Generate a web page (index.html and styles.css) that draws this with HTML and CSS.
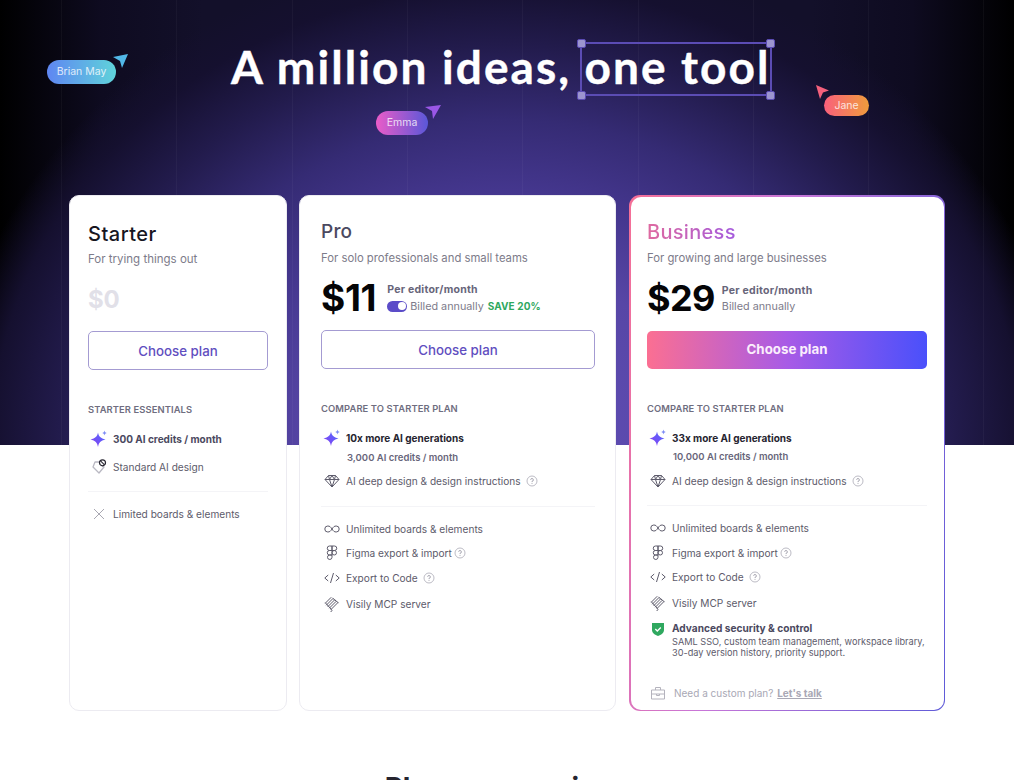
FILE: index.html
```html
<!DOCTYPE HTML>
<html><head>
  <meta charset="utf-8">
  <title>Pricing</title>
  <link rel="stylesheet" href="styles.css">
</head>
<body>

<svg width="0" height="0" class="defs">
  <defs>
    <linearGradient id="spark" x1="0" y1="1" x2="1" y2="0">
      <stop offset="0" stop-color="#8a3df0"/><stop offset="1" stop-color="#4f6cff"/>
    </linearGradient>
    <symbol id="i-spark" viewBox="0 0 18 18">
      <path fill="url(#spark)" d="M8 2.500c.8 4 2.600 5.900 7.500 7-4.900 1.100-6.700 3-7.500 7.500-.8-4.500-2.600-6.400-7.500-7.500 4.900-1.100 6.700-3 7.500-7z"/>
      <path fill="#7d8cf5" d="M14.500.5c.3 1.500 1 2.200 2.500 2.500-1.500.3-2.200 1-2.500 2.500-.3-1.500-1-2.200-2.500-2.500 1.500-.3 2.200-1 2.500-2.500z"/>
    </symbol>
    <symbol id="i-gem" viewBox="0 0 16 16">
      <path fill="none" stroke="#5d5b6b" stroke-width="1" stroke-linejoin="round" d="M4.500 2.500h7l3.500 4-7 7.500-7-7.500zM1 6.500h14M5.500 6.500 8 14l2.500-7.500M4.500 2.500l1 4 2.500-4 2.500 4 1-4"/>
    </symbol>
    <symbol id="i-inf" viewBox="0 0 16 16">
      <path fill="none" stroke="#5d5b6b" stroke-width="1" d="M8 8C6.800 6 5.700 5 3.800 5a3 3 0 0 0 0 6C5.700 11 6.800 10 8 8c1.200-2 2.300-3 4.200-3a3 3 0 0 1 0 6C10.300 11 9.200 10 8 8z"/>
    </symbol>
    <symbol id="i-figma" viewBox="0 0 16 16">
      <path fill="none" stroke="#5d5b6b" stroke-width="1" d="M8 1H5.500a2.250 2.250 0 0 0 0 4.500H8zM8 1h2.500a2.250 2.250 0 0 1 0 4.500H8zM8 5.500H5.500a2.250 2.250 0 0 0 0 4.500H8zM8 7.750a2.250 2.250 0 1 0 4.500 0 2.250 2.250 0 0 0-4.500 0zM8 10H5.500a2.250 2.250 0 1 0 2.500 2.250z"/>
    </symbol>
    <symbol id="i-code" viewBox="0 0 16 16">
      <path fill="none" stroke="#5d5b6b" stroke-width="1" d="M4.200 5 .8 8l3.400 3M11.800 5l3.400 3-3.400 3M9.500 3 6.500 13"/>
    </symbol>
    <symbol id="i-mcp" viewBox="0 0 16 16">
      <path fill="none" stroke="#5d5b6b" stroke-width="1" stroke-linecap="round" d="M1.500 7 7 1.500M2.500 9 9 2.500M4 10.500 10.500 4M5.500 12 12 5.500M7 13.500 14 6.500M1.500 7l6 6.500c1 1 .5 2-.5 2M9 2.500 14 6.500"/>
    </symbol>
    <symbol id="i-help" viewBox="0 0 12 12">
      <circle cx="6" cy="6" r="5" fill="none" stroke="#b4b3bd" stroke-width=".9"/>
      <path fill="none" stroke="#a3a2ad" stroke-width=".9" d="M4.600 4.800A1.400 1.400 0 1 1 6 6.300v.8M6 8v.9"/>
    </symbol>
  </defs>
</svg>

<div class="stage">

  <div class="hero">
    <h1>A million ideas, <span class="picked">one tool<i class="dot tl"></i><i class="dot tr"></i><i class="dot bl"></i><i class="dot br"></i></span></h1>
  </div>

  <div class="cursor brian">
    <span class="tag">Brian May</span>
    <svg class="arrow" width="16" height="14" viewBox="0 0 16 14"><path fill="#52b8e8" d="M0 3 15 0 9 14 7 7z"/></svg>
  </div>
  <div class="cursor emma">
    <span class="tag">Emma</span>
    <svg class="arrow" width="16" height="14" viewBox="0 0 16 14"><path fill="#9a57e6" d="M0 2 16 0 8 14 7 6z"/></svg>
  </div>
  <div class="cursor jane">
    <svg class="arrow" width="13" height="14" viewBox="0 0 13 14"><path fill="#f4607c" d="M0 0 13 5.500 7 7.500 4 14z"/></svg>
    <span class="tag">Jane</span>
  </div>

  <div class="plans">

    <section class="card starter">
      <h2>Starter</h2>
      <p class="sub">For trying things out</p>
      <div class="price"><b class="zero">$0</b></div>
      <a class="btn">Choose plan</a>
      <h3>Starter essentials</h3>
      <ul>
        <li class="strong"><svg class="ic big"><use href="#i-spark"/></svg>300 AI credits / month</li>
        <li class="no-ai"><svg class="ic" viewBox="0 0 16 16"><path fill="none" stroke="#b9b8c2" stroke-width="1.300" stroke-linejoin="round" d="M4 3h4L13 8l-5 6-6-6z"/><circle cx="11.500" cy="3.800" r="3" fill="#fff" stroke="#26242f" stroke-width="1.200"/><path stroke="#26242f" stroke-width="1.100" d="m9.500 1.800 4 4"/></svg>Standard AI design</li>
      </ul>
      <hr>
      <ul>
        <li><svg class="ic" viewBox="0 0 16 16"><path fill="none" stroke="#a9a8b2" d="m3 3 10 10M13 3 3 13"/></svg>Limited boards &amp; elements</li>
      </ul>
    </section>

    <section class="card pro">
      <h2>Pro</h2>
      <p class="sub">For solo professionals and small teams</p>
      <div class="price">
        <b>$11</b>
        <div class="terms">
          <span class="per">Per editor/month</span>
          <span class="bill"><i class="switch"></i>Billed annually <em>SAVE 20%</em></span>
        </div>
      </div>
      <a class="btn">Choose plan</a>
      <h3>Compare to Starter plan</h3>
      <ul>
        <li class="strong dark"><svg class="ic big"><use href="#i-spark"/></svg>10x more AI generations</li>
        <li class="credits">3,000 AI credits / month</li>
        <li><svg class="ic"><use href="#i-gem"/></svg>AI deep design &amp; design instructions<svg class="help"><use href="#i-help"/></svg></li>
      </ul>
      <hr>
      <ul>
        <li><svg class="ic"><use href="#i-inf"/></svg>Unlimited boards &amp; elements</li>
        <li><svg class="ic"><use href="#i-figma"/></svg>Figma export &amp; import<svg class="help near"><use href="#i-help"/></svg></li>
        <li><svg class="ic"><use href="#i-code"/></svg>Export to Code<svg class="help"><use href="#i-help"/></svg></li>
        <li class="mcp"><svg class="ic"><use href="#i-mcp"/></svg>Visily MCP server</li>
      </ul>
    </section>

    <div class="biz-wrap">
      <section class="card biz">
        <h2>Business</h2>
        <p class="sub">For growing and large businesses</p>
        <div class="price">
          <b>$29</b>
          <div class="terms">
            <span class="per">Per editor/month</span>
            <span class="bill">Billed annually</span>
          </div>
        </div>
        <a class="btn solid">Choose plan</a>
        <h3>Compare to Starter plan</h3>
        <ul>
          <li class="strong dark"><svg class="ic big"><use href="#i-spark"/></svg>33x more AI generations</li>
          <li class="credits">10,000 AI credits / month</li>
          <li><svg class="ic"><use href="#i-gem"/></svg>AI deep design &amp; design instructions<svg class="help"><use href="#i-help"/></svg></li>
        </ul>
        <hr>
        <ul>
          <li><svg class="ic"><use href="#i-inf"/></svg>Unlimited boards &amp; elements</li>
          <li><svg class="ic"><use href="#i-figma"/></svg>Figma export &amp; import<svg class="help near"><use href="#i-help"/></svg></li>
          <li><svg class="ic"><use href="#i-code"/></svg>Export to Code<svg class="help"><use href="#i-help"/></svg></li>
          <li class="mcp"><svg class="ic"><use href="#i-mcp"/></svg>Visily MCP server</li>
          <li class="secure">
            <svg class="ic" viewBox="0 0 16 16"><path fill="#2fa85f" d="M2 2h12v7c0 3-3 5-6 6-3-1-6-3-6-6z"/><path fill="none" stroke="#fff" stroke-width="1.300" d="m5.300 8 2 2 3.500-3.500"/></svg>
            <div>
              <span class="sec-title">Advanced security &amp; control</span>
              <span class="sec-text">SAML SSO, custom team management, workspace library, 30-day version history, priority support.</span>
            </div>
          </li>
        </ul>
        <p class="custom"><svg class="ic" viewBox="0 0 16 16"><path fill="none" stroke="#b4b3bd" d="M1.500 5h13v9h-13zM5.500 5V2.500h5V5M1.500 9h13M6.500 9v1.500h3V9"/></svg>Need a custom plan? <u>Let's talk</u></p>
      </section>
    </div>

  </div>

  <h2 class="next">Plans comparison</h2>
</div>

</body>
</html>
```

FILE: styles.css
```css
html,body {
  padding:0; margin:0;
  background: #fff;
  font-family: Inter, "Liberation Sans", sans-serif;
  color: #5d5b6b;
  overflow: hidden;
}

.defs { position: absolute; }

.stage {
  position: relative;
  height: 780px;
  overflow: hidden;
  background:
    repeating-linear-gradient(90deg, transparent 0 61px, rgba(255,255,255,.035) 61px 62px, transparent 62px 115.3px) 0 0 / 100% 445px no-repeat,
    radial-gradient(ellipse 560px 500px at 50% 100%, #6250ba 0, #5746a6 35%, #45378f 50%, #352b74 65%, #221b4c 80%, #15102f 92%, rgba(16,12,36,0) 100%) 0 0 / 100% 445px no-repeat,
    linear-gradient(90deg, #000 0, #0e0b20 10%, #13102a 20%, #13102a 80%, #0e0b20 90%, #000 100%) 0 0 / 100% 445px no-repeat;
}

/* heading */
.hero {
  height: 195px;
  box-sizing: border-box;
  padding: 36px 0 0 231px;
}
h1 {
  margin: 0;
  font: 700 46px/62px Lato, sans-serif;
  letter-spacing: 2.100px;
  -webkit-text-stroke: .4px #fff;
  color: #fff;
  white-space: nowrap;
}
.picked {
  position: relative;
  display: inline-block;
}
.picked::before {
  content: "";
  position: absolute;
  left: -4px; right: -1px; top: 6px; bottom: 2px;
  border: 2px solid #5b4cb4;
}
.dot {
  position: absolute;
  width: 7px; height: 7px;
  background: #9c95cf;
  border: 1px solid #5b4cb4;
  border-radius: 2px;
}
.tl { left: -7.500px; top: 2.500px; }
.tr { right: -4.500px; top: 2.500px; }
.bl { left: -7.500px; bottom: -1.500px; }
.br { right: -4.500px; bottom: -1.500px; }

/* the people pointing at things */
.cursor {
  position: absolute;
  display: flex;
  font-size: 10.500px;
  color: rgba(255,255,255,.8);
}
.tag {
  display: block;
  box-sizing: border-box;
  height: 24px;
  line-height: 24px;
  text-align: center;
  white-space: nowrap;
  border-radius: 12px;
}
.arrow { display: block; }
.brian { left: 47px; top: 54px; }
.brian .tag { margin-top: 6px; width: 69px; background: linear-gradient(90deg, #5f86f2, #5fd3da); }
.brian .arrow { margin-left: -3px; }
.emma { left: 376px; top: 105px; }
.emma .tag { margin-top: 6px; width: 52px; background: linear-gradient(90deg, #ea5cc8, #5a57d8); }
.emma .arrow { margin-left: -3px; }
.jane { left: 816px; top: 85px; }
.jane .tag { margin: 10px 0 0 -5px; width: 45px; height: 21px; line-height: 21px; background: linear-gradient(90deg, #f9607c, #ef9c3c); }

/* cards */
.plans {
  display: grid;
  grid-template-columns: 218px 317px 317px;
  column-gap: 12px;
  margin-left: 69px;
}
.card {
  display: flow-root;
  box-sizing: border-box;
  height: 516px;
  padding: 0 20px 0 21px;
  background: #fff;
  border: 1px solid #ecebf1;
  border-radius: 10px;
}
.starter { padding: 0 18px 0 18px; }
.biz-wrap {
  height: 516px;
  margin-left: 1px;
  padding: 1.500px;
  box-sizing: border-box;
  border-radius: 11px;
  background: linear-gradient(100deg, #f56f96 0, #c876d8 40%, #5f5bd8 100%);
}
.biz {
  height: 100%;
  border: 0;
  padding: 0 16.500px 0 16.500px;
  border-radius: 10px;
}

h2 {
  margin: 24px 0 0;
  font-size: 20px;
  line-height: 24px;
  font-weight: 500;
  color: #4b4960;
}
.pro h2 { font-size: 19px; letter-spacing: .2px; }
.starter h2 { margin-top: 26px; color: #17161f; letter-spacing: .5px; }
.biz h2 {
  margin-top: 23.500px;
  background: linear-gradient(90deg, #df6aa0, #a25ae0);
  -webkit-background-clip: text;
  background-clip: text;
  color: transparent;
  width: 92px;
  letter-spacing: .3px;
}
.sub {
  margin: 6px 0 0;
  font-size: 11.300px;
  line-height: 16px;
  color: #7d7b8a;
}
.starter .sub { margin-top: 5px; font-size: 11.500px; }

.price {
  display: flex;
  align-items: center;
  gap: 11px;
  height: 44px;
  margin-top: 10px;
}
.price b {
  font-size: 37px;
  line-height: 44px;
  font-weight: 700;
  color: #050507;
  letter-spacing: -.300px;
}
.biz .price { gap: 7px; }
.biz .price b { font-size: 36px; letter-spacing: -.600px; }
.biz .terms { padding-top: 1px; gap: 1px; }
.price .zero { font-size: 24px; padding-top: 1px; color: #e1e0e8; }
.terms { display: flex; flex-direction: column; gap: 2px; }
.per { font-size: 10.500px; line-height: 14px; font-weight: 700; color: #67657a; letter-spacing: .250px; }
.bill { display: flex; align-items: center; font-size: 10.800px; line-height: 15px; color: #7d7b8a; white-space: pre; }
.bill em { font-style: normal; font-size: 10px; font-weight: 700; color: #2fa85f; margin-left: 1px; letter-spacing: .100px; }
.switch {
  position: relative;
  width: 20px; height: 11px;
  margin-right: 3px;
  border-radius: 6px;
  background: #5b4cc8;
}
.switch::after {
  content: "";
  position: absolute;
  right: 1px; top: 1.500px;
  width: 8px; height: 8px;
  border-radius: 50%;
  background: #fff;
}

.btn {
  display: block;
  height: 38.500px;
  margin-top: 10px;
  box-sizing: border-box;
  border: 1px solid #a49bd2;
  border-radius: 5px;
  font-size: 13.300px;
  line-height: 38.500px;
  font-weight: 500;
  text-align: center;
  color: #5f4ec0;
}
.btn.solid {
  height: 37.500px;
  margin-top: 11px;
  border: 0;
  line-height: 37.500px;
  font-weight: 700;
  color: #fbeefc;
  background: linear-gradient(90deg, #fb6f92 0, #a85be6 50%, #4a50fb 100%);
}

h3 {
  margin: 33px 0 0;
  font-size: 9.400px;
  line-height: 14px;
  font-weight: 600;
  text-transform: uppercase;
  letter-spacing: .100px;
  color: #6f6d80;
}

ul { margin: 0; padding: 0; list-style: none; }
h3 + ul { margin-top: 9.500px; }
.biz h3 + ul { margin-top: 9px; }
li {
  display: flex;
  align-items: center;
  height: 24.500px;
  font-size: 10.150px;
  color: #5d5b6b;
  white-space: nowrap;
}
.ic {
  flex: none;
  width: 16px; height: 16px;
  margin: 0 6px 0 3px;
}
.ic.big { width: 18px; height: 18px; margin: 0 5px 0 2px; }
li.strong { height: 26px; font-size: 10px; font-weight: 700; color: #4b4960; }
li.strong.dark { color: #26242f; }
li.credits {
  height: 12px;
  margin: 0 0 6px 26px;
  font-size: 9.500px;
  font-weight: 600;
  color: #67657a;
}
.no-ai { margin-top: 2px; height: 25px; }
.mcp { margin-top: 1.500px; }
.help { width: 12px; height: 12px; margin-left: 5px; }
.help.near { margin-left: 2px; }
hr {
  height: 1px;
  margin: 12px 0 10px;
  border: 0;
  background: #f4f4f7;
}

li.secure { align-items: flex-start; height: auto; padding-top: 5px; white-space: normal; }
.secure div { flex: 1; }
.sec-title { display: block; font-weight: 700; color: #4b4960; line-height: 14px; }
.sec-text { display: block; margin-top: 1px; font-size: 9.200px; line-height: 11px; }
.custom {
  display: flex;
  align-items: center;
  margin: 27px 0 0;
  font-size: 10px;
  white-space: pre;
  color: #a9a8b5;
}
.custom .ic { margin-right: 8px; }
.custom u { font-weight: 700; margin-left: 1px; }

.next {
  margin: 60px 0 0;
  text-align: center;
  font-size: 28px;
  line-height: 34px;
  font-weight: 700;
  color: #26242f;
}
```
